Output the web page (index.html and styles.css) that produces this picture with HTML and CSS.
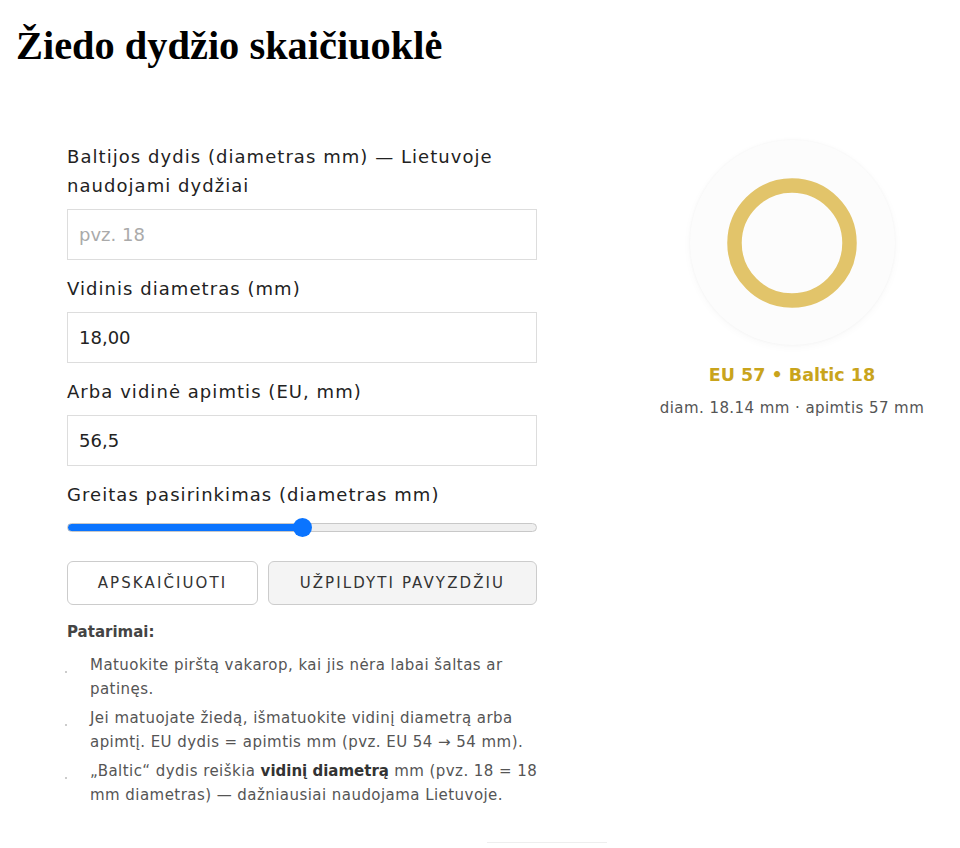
FILE: index.html
```html
<!DOCTYPE html>
<html lang="lt">
<head>
<meta charset="utf-8">
<title>Žiedo dydžio skaičiuoklė</title>
<link rel="stylesheet" href="styles.css">
</head>
<body>
<h1 class="title">Žiedo dydžio skaičiuoklė</h1>
<main class="calc">
  <section class="form">
    <label class="label" for="baltic">Baltijos dydis (diametras mm) — Lietuvoje naudojami dydžiai</label>
    <input class="field" id="baltic" type="text" placeholder="pvz. 18">
    <label class="label" for="diam">Vidinis diametras (mm)</label>
    <input class="field" id="diam" type="text" value="18,00">
    <label class="label" for="circ">Arba vidinė apimtis (EU, mm)</label>
    <input class="field" id="circ" type="text" value="56,5">
    <label class="label" for="quick">Greitas pasirinkimas (diametras mm)</label>
    <div class="slider-wrap">
      <input class="slider" id="quick" type="range" min="0" max="100" value="50">
    </div>
    <div class="buttons">
      <button class="btn btn-primary" type="button">Apskaičiuoti</button>
      <button class="btn btn-secondary" type="button">Užpildyti pavyzdžiu</button>
    </div>
    <div class="tips">
      <p class="tips-title">Patarimai:</p>
      <ul class="tips-list">
        <li>Matuokite pirštą vakarop, kai jis nėra labai šaltas ar patinęs.</li>
        <li>Jei matuojate žiedą, išmatuokite vidinį diametrą arba apimtį. EU dydis = apimtis mm (pvz. EU 54 → 54 mm).</li>
        <li>„Baltic“ dydis reiškia <strong>vidinį diametrą</strong> mm (pvz. 18 = 18 mm diametras) — dažniausiai naudojama Lietuvoje.</li>
      </ul>
    </div>
    <div class="rule"></div>
  </section>
  <aside class="preview">
    <div class="disc">
      <svg class="ring" width="130" height="130" viewBox="0 0 130 130" aria-hidden="true">
        <circle cx="65" cy="65" r="57.5" fill="none" stroke="#e2c46a" stroke-width="14.5"/>
      </svg>
    </div>
    <p class="result">EU 57 • Baltic 18</p>
    <p class="result-sub">diam. 18.14 mm · apimtis 57 mm</p>
  </aside>
</main>
</body>
</html>
```
FILE: styles.css
```css
* { box-sizing: border-box; }
body {
  margin: 0;
  background: #fff;
  font-family: "DejaVu Sans", "Noto Sans", sans-serif;
  color: #222;
}
.title {
  margin: 24px 0 0 16px;
  font-family: "Liberation Serif", "Times New Roman", serif;
  font-size: 40.4px;
  line-height: 44px;
  font-weight: bold;
  color: #000;
}
.calc {
  display: grid;
  grid-template-columns: 470px 1fr;
  column-gap: 103px;
  padding: 74px 16px 0 67px;
}
.form { display: flex; flex-direction: column; }
.label {
  font-size: 18px;
  line-height: 29px;
  letter-spacing: 1.05px;
  color: #222;
  margin-bottom: 9px;
}
.field {
  height: 51px;
  border: 1px solid #ddd;
  border-radius: 0;
  padding: 0 11px;
  font-family: inherit;
  font-size: 18px;
  color: #222;
  margin-bottom: 14px;
  background: #fff;
  outline: none;
}
.field::placeholder { color: #aaa; }
.slider-wrap { height: 20px; display: flex; align-items: center; margin-top: -1px; }
.slider {
  -webkit-appearance: none;
  appearance: none;
  width: 100%;
  height: 9px;
  margin: 0;
  border-radius: 5px;
  border: 1px solid #c8c8c8;
  background: linear-gradient(to right, #0a74ff 0 50%, #efefef 50% 100%);
}
.slider::-webkit-slider-thumb {
  -webkit-appearance: none;
  appearance: none;
  width: 19px;
  height: 19px;
  border-radius: 50%;
  background: #0a74ff;
  border: none;
}
.buttons { display: flex; gap: 10px; margin-top: 24px; }
.btn {
  height: 44px;
  border: 1px solid #ccc;
  border-radius: 6px;
  font-family: inherit;
  font-size: 15px;
  letter-spacing: 2.1px;
  text-transform: uppercase;
  color: #333;
  padding: 0;
}
.btn-primary { width: 191px; background: #fff; }
.btn-secondary { width: 269px; background: #f4f4f4; }
.tips { margin-top: 17px; }
.tips-title {
  margin: 0;
  font-size: 15px;
  line-height: 20px;
  font-weight: 700;
  color: #444;
}
.tips-list {
  list-style: none;
  margin: 11px -8px 0 0;
  padding: 0 0 0 23px;
}
.tips-list li {
  position: relative;
  font-size: 15px;
  line-height: 24px;
  letter-spacing: 0.45px;
  color: #555;
  margin-bottom: 5px;
}
.tips-list li::before {
  content: "";
  position: absolute;
  left: -25px;
  top: 18px;
  width: 2px;
  height: 2px;
  border-radius: 50%;
  background: #bbb;
}
.tips-list strong { color: #333; letter-spacing: 0; }
.rule {
  align-self: flex-start;
  margin: 30px 0 0 420px;
  width: 120px;
  height: 1px;
  background: #eee;
}
.preview {
  padding-top: 0;
  display: flex;
  flex-direction: column;
  align-items: center;
}
.disc {
  width: 205px;
  height: 205px;
  border-radius: 50%;
  background: #fcfcfc;
  box-shadow: 0 0 3px rgba(0,0,0,0.04), 0 2px 8px rgba(0,0,0,0.03);
  display: flex;
  align-items: center;
  justify-content: center;
  margin-top: -2px;
}
.result {
  margin: 17px 0 0;
  font-size: 17.5px;
  line-height: 26px;
  font-weight: 700;
  color: #c9a41c;
}
.result-sub {
  margin: 10px 0 0;
  font-size: 15px;
  line-height: 20px;
  letter-spacing: 0.43px;
  color: #555;
  white-space: nowrap;
}
```
